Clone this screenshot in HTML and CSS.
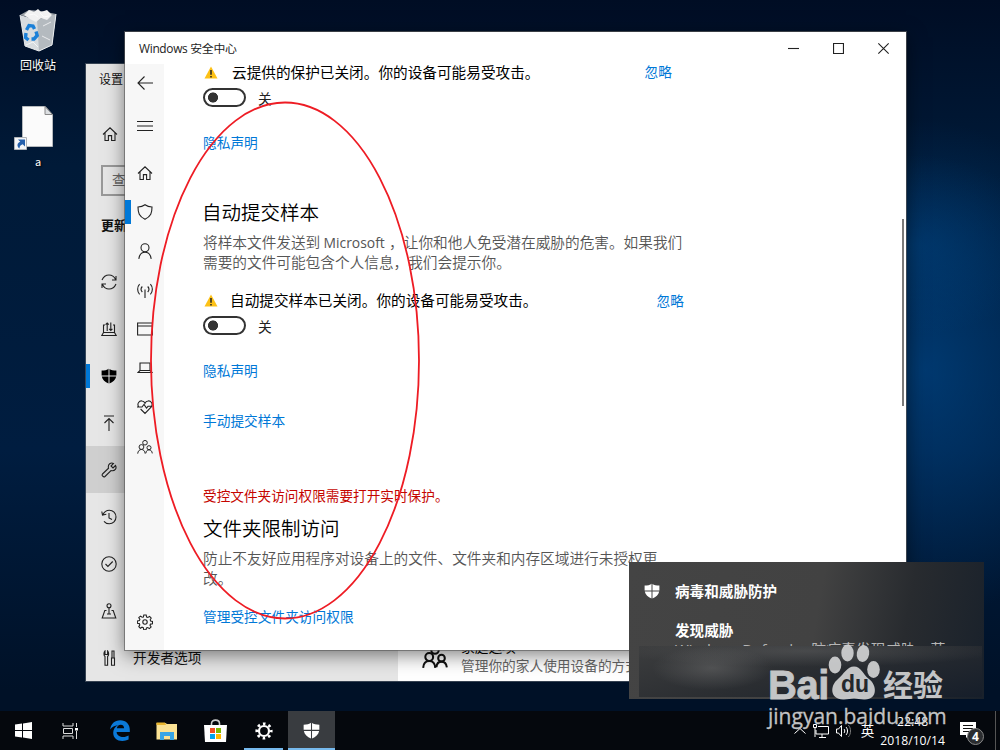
FILE: index.html
```html
<!DOCTYPE html>
<html lang="zh-CN">
<head>
    <meta charset="UTF-8">
    <meta name="viewport" content="width=device-width, initial-scale=1.0">
    <title>Windows 安全中心</title>
    <link rel="stylesheet" href="styles.css">
</head>
<body>
    <!-- shared icons -->
    <svg class="sprite" width="0" height="0">
        <symbol id="home" viewBox="0 0 16 16"><path d="M1 8.5 8 1.8l7 6.700M3 7v7.500h3.400V9.600h3.200v4.900H13V7"/></symbol>
        <symbol id="shield-solid" viewBox="0 0 16 16"><path d="M8 .4C6 2 3.500 2.500.6 2.500V7.400H7.500V1zM8.500 1v6.400h6.900V2.500C12.500 2.500 10 2 8.500 1zM.8 8.400c.6 3.300 3.300 5.500 6.700 7.200V8.400zM8.500 8.400v7.200c3.400-1.700 6.100-3.900 6.700-7.200z"/></symbol>
        <symbol id="people" viewBox="0 0 18 16"><circle cx="9" cy="3.200" r="2.600"/><circle cx="5" cy="8" r="2.700"/><circle cx="13.500" cy="8.800" r="2.300"/><path d="M.8 15.500c.2-2.900 1.900-4.700 4.200-4.700S9 12.400 9.200 15.500M10 15c.2-2.400 1.500-3.800 3.500-3.800s3.400 1.400 3.700 4"/></symbol>
        <symbol id="warn" viewBox="0 0 14 13"><path d="M7 .5 13.500 12.500H.5z" fill="#fdc116"/><path d="M7 4v4.700M7 9.900v1.500" stroke="#222" stroke-width="1.500"/></symbol>
    </svg>

    <div class="desktop">
        <div class="desktop-icons">
            <div class="desktop-icon">
                <svg width="42" height="44" viewBox="0 0 42 44">
                    <path d="M3 7 20 12 39 6 35 37 22 43 8 38z" fill="#d8dcdf"/>
                    <path d="M20 11 39 6 35 37 22 43z" fill="#b4babf"/>
                    <path d="M3 7 12 2l12 1 15 3-18 6z" fill="#9da3a8"/>
                    <path d="M7 7 12 2l5 2 4-3 3 3 6-2 5 5-5 5-6-2-5 4-6-3z" fill="#f2f2f2"/>
                    <path d="m12 7 5-1 4 3M23 5l4 4 5-1M26 18l8-4M25 28l8 4M9 37l7-3 5 5" stroke="#fff" fill="none" opacity=".7"/>
                    <path d="M3 7 8 38l14 5 13-6 4-31" fill="none" stroke="#e9ecee"/>
                    <path d="m9.500 22 2.500-4.500 4 .5 1.500 3M19 23.500l1.200 4-3.200 3.500h-2.500M11.500 32 8.500 29.500 9 25" fill="none" stroke="#1b80d8" stroke-width="3.400"/>
                </svg>
                <span>回收站</span>
            </div>
            <div class="desktop-icon shortcut">
                <svg width="42" height="46" viewBox="0 0 42 46">
                    <path d="M9.500.5H32l7.500 8v32H9.500z" fill="#fbfbfb" stroke="#b5b9bd"/>
                    <path d="M32 .5v8h7.500z" fill="#dcdfe2" stroke="#888"/>
                    <path d="M1.500 31.500h12v12h-12z" fill="#f4f6f8" stroke="#b0b4b8"/>
                    <path d="M5 33.500h7v7l-2.300-2.300C7.500 39 6.500 40 6.500 42.500 3.500 40.500 4 37 7.300 35.800z" fill="#2460ac"/>
                </svg>
                <span>a</span>
            </div>
        </div>

        <div class="window settings">
            <div class="settings-side">
                <div class="settings-title">设置</div>
                <div class="settings-home"><svg class="icon"><use href="#home"/></svg></div>
                <div class="settings-search">查找设置</div>
                <div class="settings-group">更新和安全</div>
                <ul class="settings-nav">
                    <li><svg class="icon" viewBox="0 0 16 16"><path d="M1 6C2.500 2.500 5 1 8 1c3 0 5.200 1.600 6.600 4.500M15 2v4h-4M15 10c-1.500 3.500-4 5-7 5-3 0-5.200-1.600-6.600-4.500M1 14v-4h4"/></svg></li>
                    <li><svg class="icon" viewBox="0 0 16 16"><path d="M4 4H2.500v7.500h11V4H12M2.500 11.500.8 14.500h14.400l-1.700-3M6.200 10V2M4.600 3.600 6.200 2l1.600 1.600M9.800 1.500v8M8.200 7.900l1.600 1.600 1.600-1.600"/></svg></li>
                    <li class="current"><svg class="icon solid"><use href="#shield-solid"/></svg></li>
                    <li><svg class="icon" viewBox="0 0 16 16"><path d="M3 1h10M8 16V3.500M3.500 8 8 3.500 12.500 8"/></svg></li>
                    <li class="hover"><svg class="icon" viewBox="0 0 16 16"><path d="M14.500 3.500 12 6 10 4l2.500-2.500C10 .2 6.500 2 7.500 6.200L1.500 12c-1.200 1.400 1 3.700 2.500 2.500l6-6c4 1 6-2.300 4.500-5z"/></svg></li>
                    <li><svg class="icon" viewBox="0 0 16 16"><path d="M2 5.500C3.200 3 5.400 1.200 8.300 1.200c3.800 0 6.700 3 6.700 6.800s-3 6.800-6.700 6.800c-2.200 0-4-.9-5.300-2.500M.8 2.500 1.500 6l3.800-.8M8 4v5l3 1.500"/></svg></li>
                    <li><svg class="icon" viewBox="0 0 16 16"><circle cx="8" cy="8" r="7.200"/><path d="m4.500 8 2.400 2.500L11.700 5.500"/></svg></li>
                    <li><svg class="icon" viewBox="0 0 16 16"><circle cx="8" cy="2.800" r="2"/><path d="M8 5v6M5.500 7.500H3.800L1.200 15h13.600L12.200 7.500h-1.700M6 11h4"/></svg></li>
                    <li><svg class="icon" viewBox="0 0 16 16"><path d="M4 6.500v8.800h2.600V6.500C8 5.500 8 2.500 6.600 1v3.500H4V1C2.600 2.500 2.600 5.500 4 6.500zM11 1h2v7h-2zM10.500 8h3v7.300h-3z"/></svg><span>开发者选项</span></li>
                </ul>
            </div>
            <div class="settings-main">
                <svg class="family-icon"><use href="#people"/></svg>
                <div>
                    <div class="family-title">家庭选项</div>
                    <div class="family-text">管理你的家人使用设备的方式</div>
                </div>
            </div>
        </div>

        <div class="window security">
            <div class="titlebar">
                <span class="title">Windows 安全中心</span>
                <svg viewBox="0 0 10 10"><path d="M0 5h10"/></svg>
                <svg viewBox="0 0 10 10"><path d="M.5.5h9v9h-9z"/></svg>
                <svg viewBox="0 0 10 10"><path d="m.3.300 9.400 9.400M9.700.3.300 9.700"/></svg>
            </div>
            <div class="security-body">
                <ul class="rail">
                    <li class="back"><svg class="icon" viewBox="0 0 16 16"><path d="M16 8H1M7.500 1.500 1 8l6.500 6.500"/></svg></li>
                    <li class="menu"><svg class="icon" viewBox="0 0 16 16"><path d="M0 3.500h16M0 8h16M0 12.500h16"/></svg></li>
                    <li><svg class="icon"><use href="#home"/></svg></li>
                    <li class="current"><svg class="icon" viewBox="0 0 16 16"><path d="M8 .8C6 2.300 3.500 3 1 3c0 6 1 9 7 12.300C14 12 15 9 15 3c-2.500 0-5-.7-7-2.200z"/></svg></li>
                    <li><svg class="icon" viewBox="0 0 16 16"><circle cx="8" cy="4.800" r="4"/><path d="M1.800 15.800c.6-4.200 3-6.600 6.200-6.600s5.600 2.400 6.200 6.600"/></svg></li>
                    <li><svg class="icon" viewBox="0 0 16 16"><path d="M8 7.500V16M5.300 10c-1.500-1.600-1.500-3.900 0-5.500M10.700 10c1.500-1.600 1.500-3.900 0-5.500M2.600 12.300c-2.600-2.800-2.600-7.300 0-10.100M13.400 12.300c2.600-2.800 2.600-7.300 0-10.100"/></svg></li>
                    <li><svg class="icon" viewBox="0 0 16 16"><path d="M.6 2h14.800v12H.6zM.6 5h14.800"/></svg></li>
                    <li><svg class="icon" viewBox="0 0 16 16"><path d="M3 3h10v7.500H3zM3 10.500l-2 2h14l-2-2"/></svg></li>
                    <li><svg class="icon" viewBox="0 0 16 16"><path d="M1.700 8C-.5 4.500 2.500 1.500 5 2c1.400.2 2.400 1 3 2.200C8.600 3 9.600 2.200 11 2c2.500-.5 5.500 2.500 3.300 6L8 14.500 3.600 10M0 8h5l2-2.500L9.500 9 11 7.300h4.500"/></svg></li>
                    <li class="group"><svg class="icon"><use href="#people"/></svg></li>
                    <li class="gear"><svg class="icon" viewBox="0 0 16 16"><circle cx="8" cy="8" r="2.200"/><path d="M6.800 1h2.400l.4 2 1.300.5L12.600 2.400l1.600 1.700-1 1.700.4 1.200 1.900.4v2.300l-2 .4-.5 1.200 1.100 1.700-1.700 1.600-1.600-1.100-1.300.5L9 15.700H6.700l-.4-2-1.300-.5-1.600 1-1.600-1.600 1-1.700-.5-1.300-1.900-.4V7l2-.4.5-1.200-1.100-1.700 1.700-1.600 1.600 1.100L6.400 3z"/></svg></li>
                </ul>
                <div class="content">
                    <div class="alert first">
                        <svg><use href="#warn"/></svg>
                        <span>云提供的保护已关闭。你的设备可能易受攻击。</span>
                        <a class="link">忽略</a>
                    </div>
                    <div class="toggle-row"><span class="toggle"></span>关</div>
                    <a class="link privacy">隐私声明</a>

                    <h2>自动提交样本</h2>
                    <p class="desc">将样本文件发送到 <span class="latin">Microsoft</span> ，让你和他人免受潜在威胁的危害。如果我们<br>需要的文件可能包含个人信息，我们会提示你。</p>
                    <div class="alert">
                        <svg><use href="#warn"/></svg>
                        <span>自动提交样本已关闭。你的设备可能易受攻击。</span>
                        <a class="link">忽略</a>
                    </div>
                    <div class="toggle-row"><span class="toggle"></span>关</div>
                    <a class="link privacy">隐私声明</a>
                    <a class="link submit">手动提交样本</a>

                    <div class="error">受控文件夹访问权限需要打开实时保护。</div>
                    <h2 class="folder">文件夹限制访问</h2>
                    <p class="desc">防止不友好应用程序对设备上的文件、文件夹和内存区域进行未授权更<br>改。</p>
                    <a class="link manage">管理受控文件夹访问权限</a>
                </div>
            </div>
            <div class="scrollbar"></div>
        </div>

        <!-- red circle drawn on the page -->
        <svg class="marker" width="274" height="522" viewBox="0 0 274 522">
            <ellipse cx="137" cy="260.500" rx="134" ry="258"/>
        </svg>

        <div class="toast">
            <div class="toast-head">
                <svg class="icon solid"><use href="#shield-solid"/></svg>
                <span>病毒和威胁防护</span>
            </div>
            <div class="toast-title">发现威胁</div>
            <div class="toast-text">Windows Defender 防病毒发现威胁。获</div>
            <div class="toast-blur"></div>
        </div>

        <div class="taskbar">
            <div class="task"><svg width="17" height="17" viewBox="0 0 17 17" fill="#fff"><path d="M0 2.600 7 1.500V8H0zM8 1.400 17 0v8H8zM0 9h7v6.500L0 14.400zM8 9h9v8l-9-1.400z"/></svg></div>
            <div class="task"><svg width="17" height="16" viewBox="0 0 17 16" fill="none" stroke="#ddd"><path d="M1 0v3h10V0M1 16v-3h10v3M1.500 5.500h9v5h-9zM14.500 0v4M14.500 8v8"/><path d="M13 5h3v2.500h-3z" fill="#fff" stroke="none"/></svg></div>
            <div class="task edge"><svg width="20" height="21" viewBox="0 0 20 21"><path d="M.2 9.500C.8 4 4.600.2 10.200.2c6 0 9.600 4.200 9.600 9.600V12H6.600c.2 3.400 3.400 5 6.600 5 2 0 3.900-.6 5.400-1.500v4.100c-1.800.9-4 1.300-6.200 1.300-5.500 0-9.200-3.100-9.200-8.200 0-3.300 1.800-6 4.800-7.500-3.400.2-6 1.800-7.800 4.300zM6.800 8.300h7.300c0-2-1-3.600-3.400-3.600-2.100 0-3.600 1.600-3.900 3.600z" fill="#0b7ad9"/></svg></div>
            <div class="task"><svg width="22" height="18" viewBox="0 0 22 18"><path d="M.5 1h9l1.500 1h10v15.500H.5z" fill="#fbe294"/><path d="M.5.5h8.500l1 2.500H.5z" fill="#e9b52e"/><path d="M4 18v-8h14v8h-4v-4H8v4z" fill="#37a5e6"/></svg></div>
            <div class="task store"><svg width="23" height="23" viewBox="0 0 23 23"><path d="M7.500 7V4.500c0-4.500 8-4.500 8 0V7" fill="none" stroke="#ccc" stroke-width="1.600"/><path d="M0 6h23l-1 17H1z" fill="#fff"/><path d="M6 9h5v5H6z" fill="#f04e23"/><path d="M12 9h5v5h-5z" fill="#7eb900"/><path d="M6 15h5v5H6z" fill="#00a3ee"/><path d="M12 15h5v5h-5z" fill="#feb800"/></svg></div>
            <div class="task running"><svg width="18" height="18" viewBox="0 0 18 18" fill="none" stroke="#fff"><circle cx="9" cy="9" r="5" stroke-width="2.200"/><circle cx="9" cy="9" r="7.300" stroke-width="2.600" stroke-dasharray="2.600 3.133" stroke-dashoffset="1.300"/></svg></div>
            <div class="task active"><svg width="17" height="17" fill="#fff"><use href="#shield-solid"/></svg></div>

            <div class="tray">
                <svg width="12" height="7" viewBox="0 0 12 7"><path d="m.5 6.500 5.500-5 5.500 5"/></svg>
                <svg class="net" width="16" height="14" viewBox="0 0 16 14"><path d="M5 2.500h10.500v7.500H3V6M9 10v3M6 13.500h7M.5.500h3v3h-3zM2 4v9"/></svg>
                <svg class="vol" width="16" height="14" viewBox="0 0 16 14"><path d="M.5 5h2l3-3.500v11L2.500 9h-2zM8 5c1 1.200 1 2.800 0 4M10 3c2 2.200 2 5.800 0 8"/><path d="M12.300 1c3 3.300 3 8.700 0 12" stroke="#777"/></svg>
                <span class="ime">英</span>
                <div class="clock"><span>22:48</span><span>2018/10/14</span></div>
                <div class="action">
                    <svg width="16" height="16" viewBox="0 0 16 16"><path d="M0 0h16v13H9l-3 3v-3H0z" fill="#fff" stroke="none"/><path d="M3 3.500h10M3 6.500h10M3 9.500h7" stroke="#111"/></svg>
                    <span class="badge">4</span>
                </div>
                <div class="show-desktop"></div>
            </div>
        </div>

        <div class="watermark">
            <div class="wm-logo">
                <span class="wm-bai">Bai</span>
                <div class="wm-paw">
                    <svg width="52" height="56" viewBox="0 0 52 56">
                        <ellipse cx="7" cy="21" rx="6.300" ry="8.500"/>
                        <ellipse cx="19.500" cy="9" rx="6.200" ry="8.500"/>
                        <ellipse cx="35" cy="9.500" rx="6.200" ry="8.500" transform="rotate(10 35 9.500)"/>
                        <ellipse cx="45.500" cy="25.500" rx="6.300" ry="8.500"/>
                        <path d="M26 22.500c7 0 9 8 15 12.500 8 6 9 20-4 20.500-5 .2-7-1-11-1s-6 1.200-11 1C2 55 1.500 42 10 35c6-5 9-12.500 16-12.500z"/>
                    </svg>
                    <span>du</span>
                </div>
                <span class="wm-cn">经验</span>
            </div>
            <div class="wm-url">jingyan.baidu.com</div>
        </div>
    </div>
</body>
</html>
```

FILE: styles.css
```css
* {
    margin: 0;
    padding: 0;
    box-sizing: border-box;
}

body {
    width: 1000px;
    height: 750px;
    overflow: hidden;
    font-family: 'Noto Sans CJK SC', sans-serif;
    font-size: 13.7px;
}

ul {
    list-style: none;
}

.sprite {
    position: absolute;
}

.desktop {
    position: relative;
    width: 1000px;
    height: 750px;
    overflow: hidden;
    background:
        radial-gradient(ellipse 130px 90px at 915px 245px, rgba(0, 80, 150, 0.35), transparent),
        radial-gradient(ellipse 190px 250px at 925px 370px, rgba(0, 76, 145, 0.6), transparent),
        linear-gradient(180deg, #000d24 0%, #001a38 22%, #001d40 60%, #001127 92%);
}

.icon {
    width: 16px;
    height: 16px;
    flex: none;
    fill: none;
    stroke: #222;
    stroke-width: 1.1;
}

.icon.solid {
    fill: #000;
    stroke: none;
}

/* desktop icons */
.desktop-icons {
    display: flex;
    flex-direction: column;
    align-items: center;
    width: 76px;
    padding-top: 8px;
}

.desktop-icon {
    display: flex;
    flex-direction: column;
    align-items: center;
    color: #fff;
    font-size: 12px;
    line-height: 18px;
    text-shadow: 1px 1px 2px #000;
}

.desktop-icon span {
    margin-top: 4px;
}

.desktop-icon.shortcut {
    margin-top: 32px;
    font-size: 11px;
}

.desktop-icon.shortcut svg {
    margin-right: 8px;
}

.desktop-icon.shortcut span {
    margin-top: 0;
}

/* windows */
.window {
    position: absolute;
}

.settings {
    left: 86px;
    top: 64px;
    width: 790px;
    height: 617px;
    display: flex;
    background: #fff;
    box-shadow: 0 0 0 1px rgba(90, 100, 110, 0.6);
}

.settings-side {
    width: 312px;
    background: #e6e6e6;
    color: #111;
}

.settings-title {
    padding: 5px 0 0 13px;
    font-size: 12px;
    line-height: 20px;
}

.settings-home {
    display: flex;
    padding: 37px 0 0 16px;
}

.settings-search {
    width: 270px;
    height: 31px;
    margin: 23px 0 0 15px;
    padding-left: 9px;
    border: 2px solid #999;
    color: #666;
    line-height: 25px;
}

.settings-group {
    margin: 19px 0 0 15px;
    font-size: 13px;
    font-weight: bold;
    line-height: 20px;
}

.settings-nav {
    margin-top: 23px;
}

.settings-nav li {
    display: flex;
    align-items: center;
    height: 47px;
    padding-left: 15px;
}

.settings-nav span {
    margin: -2px 0 0 16px;
}

.settings-nav .current {
    background: linear-gradient(#0078d7, #0078d7) 0 50% / 4px 24px no-repeat;
}

.settings-nav .hover {
    background: #cfcfcf;
}

.settings-main {
    flex: 1;
    display: flex;
    align-items: flex-end;
    padding: 0 0 6px 24px;
}

.family-icon {
    width: 26px;
    height: 24px;
    margin: 0 13px 6px 0;
    fill: none;
    stroke: #111;
    stroke-width: 1.4;
}

.family-title {
    line-height: 18px;
}

.family-text {
    color: #666;
    line-height: 20px;
}

.security {
    left: 125px;
    top: 32px;
    width: 781px;
    height: 618px;
    background: #fff;
    box-shadow: 0 0 0 1px rgba(90, 90, 90, 0.65), 0 5px 18px rgba(0, 0, 0, 0.5);
}

.titlebar {
    display: flex;
    align-items: center;
    height: 32px;
    padding: 0 17px 0 14px;
}

.titlebar .title {
    flex: 1;
    margin-top: -2px;
    color: #222;
    font-family: 'Open Sans', 'Noto Sans CJK SC', sans-serif;
    font-size: 11.9px;
    letter-spacing: -0.3px;
}

.titlebar svg {
    width: 11px;
    height: 11px;
    margin-left: 34px;
    fill: none;
    stroke: #222;
    overflow: visible;
}

.security-body {
    display: flex;
    height: 586px;
}

.rail {
    display: flex;
    flex-direction: column;
    width: 39px;
    padding-bottom: 9px;
    background: #f7f7f7;
}

.rail li {
    display: flex;
    align-items: center;
    justify-content: center;
    height: 39px;
}

.rail .back {
    height: 38px;
}

.rail .group {
    padding-top: 2px;
}

.rail .menu {
    height: 48px;
    margin-bottom: 3px;
}

.rail .current {
    background: linear-gradient(#0078d7, #0078d7) 0 50% / 6px 24px no-repeat;
}

.rail .gear {
    margin-top: auto;
}

.content {
    display: flex;
    flex-direction: column;
    align-items: flex-start;
    flex: 1;
    padding-left: 39px;
    line-height: 20px;
}

.alert {
    display: flex;
    align-items: center;
    width: 481px;
    margin-top: 18px;
    color: #000;
    font-size: 14.65px;
}

.alert svg {
    width: 14px;
    height: 13px;
    margin: 1px 12px 0 1px;
}

.alert .link {
    margin-left: auto;
}

.alert.first {
    width: 469px;
    margin-top: -2px;
}

.alert.first svg {
    margin-right: 14px;
}

.alert.first .link {
    margin-top: -2px;
}

.toggle-row {
    display: flex;
    gap: 12px;
    margin-top: 6px;
    color: #222;
}

.toggle {
    width: 43px;
    height: 19px;
    border: 2px solid #333;
    border-radius: 10px;
    background: radial-gradient(circle at 8px 7.5px, #333 4.7px, transparent 5.4px);
}

.link {
    color: #0078d7;
    font-size: 13.7px;
}

.privacy {
    margin-top: 24px;
}

.submit {
    margin-top: 30px;
}

.manage {
    margin-top: 18px;
}

.content h2 {
    margin: 46px 0 0 -1px;
    color: #000;
    font-size: 19.5px;
    font-weight: 350;
    line-height: 28px;
}

.content h2.folder {
    margin: 9px 0 0;
}

.desc {
    margin-top: 6px;
    color: #555;
    font-size: 14.66px;
    font-weight: 350;
    white-space: nowrap;
}

.latin {
    font-family: 'Open Sans', sans-serif;
    font-size: 13.9px;
    font-weight: 400;
    line-height: 1;
    margin-right: 1px;
}

.error {
    margin-top: 55px;
    color: #c50500;
    font-size: 13.65px;
}

.scrollbar {
    position: absolute;
    right: 2px;
    top: 187px;
    width: 2px;
    height: 187px;
    background: #7a7a7a;
}

.marker {
    position: absolute;
    left: 148px;
    top: 100px;
    fill: none;
    stroke: #ee1c24;
    stroke-width: 1.8;
}

/* notification */
.toast {
    position: absolute;
    left: 629px;
    top: 562px;
    width: 355px;
    height: 137px;
    padding: 19px 0 0 15px;
    background: linear-gradient(100deg, #444 0%, #424242 52%, #282b2f 76%, #19212b 100%);
    color: #fff;
    font-size: 14.6px;
    font-weight: bold;
    line-height: 20px;
    overflow: hidden;
}

.toast-head {
    display: flex;
    align-items: center;
    gap: 15px;
}

.toast-head .icon {
    fill: #fff;
}

.toast-title {
    margin: 19px 0 0 31px;
}

.toast-text {
    margin: -1px 0 0 31px;
    color: #b5b5b5;
    font-family: 'Open Sans', 'Noto Sans CJK SC', sans-serif;
    font-size: 14.9px;
    font-weight: normal;
    white-space: nowrap;
}

.toast-blur {
    position: absolute;
    left: 10px;
    top: 84px;
    width: 343px;
    height: 51px;
    background:
        radial-gradient(ellipse 60px 22px at 73px 22px, rgba(110, 110, 110, 0.5), transparent),
        radial-gradient(ellipse 190px 16px at 170px 5px, rgba(110, 110, 110, 0.4), transparent),
        linear-gradient(165deg, #3c3d3e 0%, #2a2d31 50%, #161e2a 100%);
}

/* taskbar */
.taskbar {
    position: absolute;
    left: 0;
    bottom: 0;
    display: flex;
    width: 1000px;
    height: 39px;
    background: #05080d;
    color: #fff;
}

.task {
    display: flex;
    align-items: center;
    justify-content: center;
    width: 47px;
}

.task.edge {
    margin-left: 2px;
}

.task.store {
    margin-left: 2px;
}

.task.running {
    width: 39px;
    margin: 0 5px;
    border-bottom: 2px solid #76b9ed;
    padding-top: 2px;
}

.task.active {
    background: #393c40;
    border-bottom: 2px solid #76b9ed;
    padding-top: 2px;
}

.tray {
    display: flex;
    align-items: center;
    margin-left: auto;
    fill: none;
    stroke: #fff;
}

.tray .net {
    margin-left: 7px;
}

.tray .vol {
    margin-left: 7px;
}

.ime {
    margin: -2px 0 0 9px;
    font-size: 13.5px;
}

.clock {
    display: flex;
    flex-direction: column;
    align-items: center;
    margin: 0 15px 0 6px;
    font-family: 'Open Sans', sans-serif;
    font-size: 12.2px;
    line-height: 19px;
}

.action {
    position: relative;
    width: 25px;
    height: 18px;
}

.badge {
    position: absolute;
    left: 7px;
    top: 6px;
    width: 17px;
    height: 17px;
    border: 1px solid #888;
    border-radius: 50%;
    background: #2b2d30;
    font: bold 12px/15px 'Open Sans', sans-serif;
    text-align: center;
}

.show-desktop {
    width: 5px;
    height: 39px;
    margin-left: 10px;
    border-left: 1px solid #555;
}

/* site watermark */
.watermark {
    position: absolute;
    left: 768px;
    top: 644px;
    width: 190px;
    color: #d0d1d2;
    opacity: 0.93;
}

.wm-logo {
    display: flex;
    align-items: flex-end;
    height: 57px;
}

.wm-bai {
    width: 60px;
    font: bold 40px/40px 'Liberation Sans', sans-serif;
    letter-spacing: -0.5px;
    margin-bottom: -4px;
    -webkit-text-stroke: 0.8px #d0d1d2;
}

.wm-paw {
    position: relative;
    width: 52px;
    height: 57px;
    fill: #d0d1d2;
}

.wm-paw span {
    position: absolute;
    left: 13px;
    top: 27px;
    color: #24282d;
    font: bold 23px/26px 'Liberation Sans', sans-serif;
}

.wm-cn {
    margin: 0 0 0 3px;
    font-size: 30px;
    font-weight: bold;
    line-height: 36px;
}

.wm-url {
    font: 21px/26px 'Open Sans', sans-serif;
    margin-top: 2px;
    white-space: nowrap;
    -webkit-text-stroke: 0.3px #d0d1d2;
}
```
